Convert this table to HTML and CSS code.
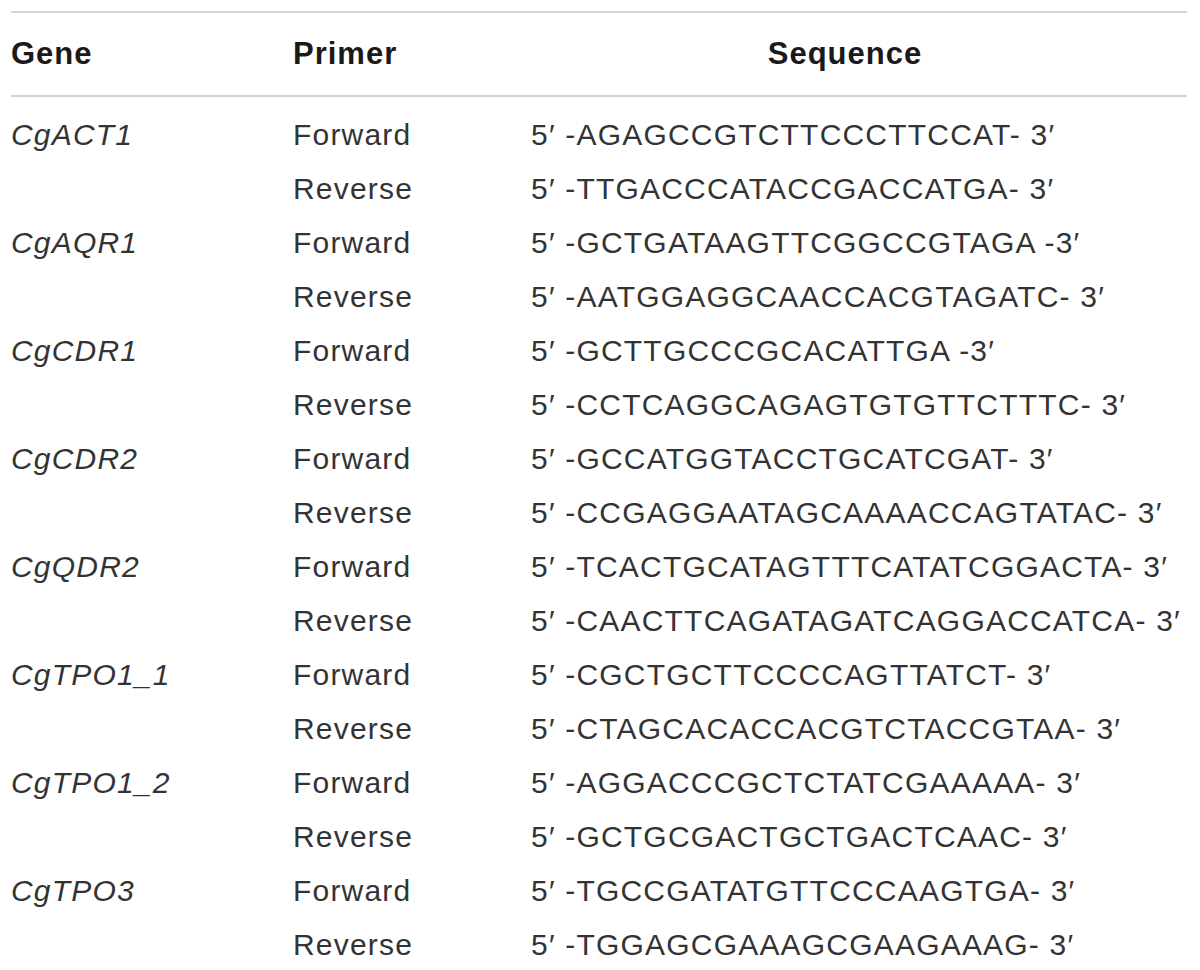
FILE: index.html
```html
<!DOCTYPE html>
<html>
<head>
<meta charset="utf-8">
<link rel="stylesheet" href="styles.css">
</head>
<body>
<table class="primers">
  <thead>
    <tr><th class="c-gene">Gene</th><th class="c-primer">Primer</th><th class="c-seq">Sequence</th></tr>
  </thead>
  <tbody>
    <tr class="first"><td class="gene">CgACT1</td><td>Forward</td><td>5′ -AGAGCCGTCTTCCCTTCCAT- 3′</td></tr>
    <tr><td></td><td>Reverse</td><td>5′ -TTGACCCATACCGACCATGA- 3′</td></tr>
    <tr><td class="gene">CgAQR1</td><td>Forward</td><td>5′ -GCTGATAAGTTCGGCCGTAGA -3′</td></tr>
    <tr><td></td><td>Reverse</td><td>5′ -AATGGAGGCAACCACGTAGATC- 3′</td></tr>
    <tr><td class="gene">CgCDR1</td><td>Forward</td><td>5′ -GCTTGCCCGCACATTGA -3′</td></tr>
    <tr><td></td><td>Reverse</td><td>5′ -CCTCAGGCAGAGTGTGTTCTTTC- 3′</td></tr>
    <tr><td class="gene">CgCDR2</td><td>Forward</td><td>5′ -GCCATGGTACCTGCATCGAT- 3′</td></tr>
    <tr><td></td><td>Reverse</td><td>5′ -CCGAGGAATAGCAAAACCAGTATAC- 3′</td></tr>
    <tr><td class="gene">CgQDR2</td><td>Forward</td><td>5′ -TCACTGCATAGTTTCATATCGGACTA- 3′</td></tr>
    <tr><td></td><td>Reverse</td><td>5′ -CAACTTCAGATAGATCAGGACCATCA- 3′</td></tr>
    <tr><td class="gene">CgTPO1_1</td><td>Forward</td><td>5′ -CGCTGCTTCCCCAGTTATCT- 3′</td></tr>
    <tr><td></td><td>Reverse</td><td>5′ -CTAGCACACCACGTCTACCGTAA- 3′</td></tr>
    <tr><td class="gene">CgTPO1_2</td><td>Forward</td><td>5′ -AGGACCCGCTCTATCGAAAAA- 3′</td></tr>
    <tr><td></td><td>Reverse</td><td>5′ -GCTGCGACTGCTGACTCAAC- 3′</td></tr>
    <tr><td class="gene">CgTPO3</td><td>Forward</td><td>5′ -TGCCGATATGTTCCCAAGTGA- 3′</td></tr>
    <tr><td></td><td>Reverse</td><td>5′ -TGGAGCGAAAGCGAAGAAAG- 3′</td></tr>
  </tbody>
</table>
</body>
</html>
```
FILE: styles.css
```css
html, body {
  margin: 0;
  padding: 0;
  background: #ffffff;
}
body {
  padding: 11px 13px 0 11px;
  font-family: "Liberation Sans", Arial, sans-serif;
  color: #333333;
}
.primers {
  width: 100%;
  border-collapse: collapse;
  font-size: 30px;
  letter-spacing: 1.2px;
}
.primers thead tr {
  border-top: 2px solid #d4d4d4;
  border-bottom: 2px solid #d4d4d4;
}
.primers th {
  height: 82px;
  padding: 0;
  text-align: left;
  font-size: 31px;
  font-weight: bold;
  letter-spacing: 1px;
  color: #1a1a1a;
  vertical-align: middle;
}
.primers th.c-gene { width: 282px; }
.primers th.c-primer { width: 238px; }
.primers th.c-seq { text-align: center; padding-right: 28px; }
.primers td {
  height: 54px;
  padding: 0;
  vertical-align: middle;
  white-space: nowrap;
}
.primers tr.first td {
  padding-top: 11px;
  height: 54px;
}
.primers td.gene {
  font-style: italic;
}
```
